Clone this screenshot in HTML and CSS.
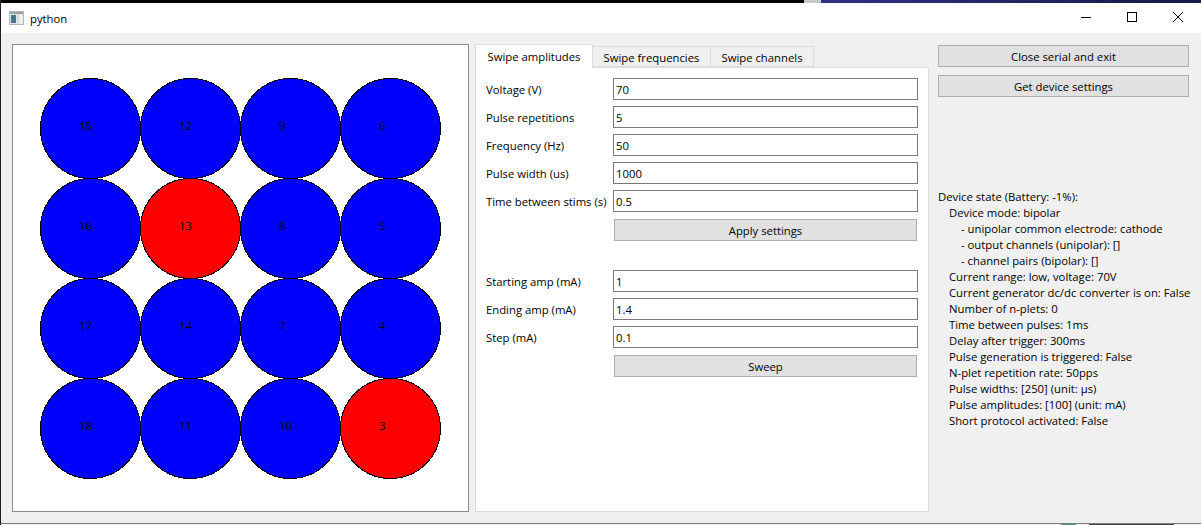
FILE: index.html
```html
<!DOCTYPE html>
<html lang="en">
<head>
  <meta charset="UTF-8">
  <title>python</title>
  <link rel="stylesheet" href="styles.css">
</head>
<body>
  <div class="desktop-top"></div>

  <!-- Title bar -->
  <div class="titlebar">
    <svg class="app-icon" width="15" height="14" viewBox="0 0 15 14">
      <rect x="0.5" y="0.5" width="14" height="13" fill="#e4e8ea" stroke="#b4b8bb"/>
      <rect x="1" y="1" width="13" height="2" fill="#9aa1a6"/>
      <rect x="2" y="4" width="5" height="8" fill="#3d7d86"/>
      <rect x="8" y="4" width="2" height="8" fill="#cfe0dc"/>
      <rect x="11" y="4" width="2" height="8" fill="#f2f4f4"/>
    </svg>
    <span class="app-name">python</span>
    <div class="win-controls">
      <svg class="win-btn" width="46" height="30" viewBox="0 0 46 30"><path d="M18 14.5h10" stroke="#000" fill="none"/></svg>
      <svg class="win-btn" width="46" height="30" viewBox="0 0 46 30"><rect x="18.5" y="9.5" width="9" height="9" stroke="#000" fill="none"/></svg>
      <svg class="win-btn" width="46" height="30" viewBox="0 0 46 30"><path d="M18 9l10 10M28 9l-10 10" stroke="#000" fill="none"/></svg>
    </div>
  </div>

  <div class="main">
    <!-- Electrode map -->
    <div class="canvas-box">
      <svg class="electrodes" width="402" height="402" viewBox="0 0 402 402">
        <g class="dots" shape-rendering="crispEdges">
          <circle cx="50.5" cy="50.5" r="50" fill="#0000ff"/>
          <circle cx="150.5" cy="50.5" r="50" fill="#0000ff"/>
          <circle cx="250.5" cy="50.5" r="50" fill="#0000ff"/>
          <circle cx="350.5" cy="50.5" r="50" fill="#0000ff"/>
          <circle cx="50.5" cy="150.5" r="50" fill="#0000ff"/>
          <circle cx="150.5" cy="150.5" r="50" fill="#ff0000"/>
          <circle cx="250.5" cy="150.5" r="50" fill="#0000ff"/>
          <circle cx="350.5" cy="150.5" r="50" fill="#0000ff"/>
          <circle cx="50.5" cy="250.5" r="50" fill="#0000ff"/>
          <circle cx="150.5" cy="250.5" r="50" fill="#0000ff"/>
          <circle cx="250.5" cy="250.5" r="50" fill="#0000ff"/>
          <circle cx="350.5" cy="250.5" r="50" fill="#0000ff"/>
          <circle cx="50.5" cy="350.5" r="50" fill="#0000ff"/>
          <circle cx="150.5" cy="350.5" r="50" fill="#0000ff"/>
          <circle cx="250.5" cy="350.5" r="50" fill="#0000ff"/>
          <circle cx="350.5" cy="350.5" r="50" fill="#ff0000"/>
        </g>
        <g class="dot-labels">
          <text x="39" y="52">15</text><text x="139" y="52">12</text><text x="239" y="52">9</text><text x="339" y="52">6</text>
          <text x="39" y="152">16</text><text x="139" y="152">13</text><text x="239" y="152">8</text><text x="339" y="152">5</text>
          <text x="39" y="252">17</text><text x="139" y="252">14</text><text x="239" y="252">7</text><text x="339" y="252">4</text>
          <text x="39" y="352">18</text><text x="139" y="352">11</text><text x="239" y="352">10</text><text x="339" y="352">3</text>
        </g>
      </svg>
    </div>

    <!-- Tabs -->
    <div class="tabs">
      <div class="tab-bar">
        <div class="tab active">Swipe amplitudes</div>
        <div class="tab tab-freq">Swipe frequencies</div>
        <div class="tab tab-chan">Swipe channels</div>
      </div>
      <div class="tab-panel">
        <div class="form-row"><span class="form-label">Voltage (V)</span><input class="field" value="70"></div>
        <div class="form-row"><span class="form-label">Pulse repetitions</span><input class="field" value="5"></div>
        <div class="form-row"><span class="form-label">Frequency (Hz)</span><input class="field" value="50"></div>
        <div class="form-row"><span class="form-label">Pulse width (us)</span><input class="field" value="1000"></div>
        <div class="form-row"><span class="form-label">Time between stims (s)</span><input class="field" value="0.5"></div>
        <div class="btn-row"><button class="btn">Apply settings</button></div>
        <div class="form-row section-start"><span class="form-label">Starting amp (mA)</span><input class="field" value="1"></div>
        <div class="form-row"><span class="form-label">Ending amp (mA)</span><input class="field" value="1.4"></div>
        <div class="form-row"><span class="form-label">Step (mA)</span><input class="field" value="0.1"></div>
        <div class="btn-row"><button class="btn">Sweep</button></div>
      </div>
    </div>

    <!-- Device side -->
    <div class="side">
      <button class="btn">Close serial and exit</button>
      <button class="btn">Get device settings</button>
      <div class="state">
        <div>Device state (Battery: -1%):</div>
        <div class="in1">Device mode: bipolar</div>
        <div class="in2">- unipolar common electrode: cathode</div>
        <div class="in2">- output channels (unipolar): []</div>
        <div class="in2">- channel pairs (bipolar): []</div>
        <div class="in1">Current range: low, voltage: 70V</div>
        <div class="in1">Current generator dc/dc converter is on: False</div>
        <div class="in1">Number of n-plets: 0</div>
        <div class="in1">Time between pulses: 1ms</div>
        <div class="in1">Delay after trigger: 300ms</div>
        <div class="in1">Pulse generation is triggered: False</div>
        <div class="in1">N-plet repetition rate: 50pps</div>
        <div class="in1">Pulse widths: [250] (unit: µs)</div>
        <div class="in1">Pulse amplitudes: [100] (unit: mA)</div>
        <div class="in1">Short protocol activated: False</div>
      </div>
    </div>
  </div>

  <div class="desktop-bottom"></div>
</body>
</html>
```

FILE: styles.css
```css
html, body {
  margin: 0;
  padding: 0;
  height: 100%;
  overflow: hidden;
}

body {
  display: flex;
  flex-direction: column;
  font-family: "Open Sans", "Noto Sans", sans-serif;
  font-size: 11.3px;
  color: #000;
  background: #f0f0f0;
  border-left: 1px solid #1c1f2b;
  box-sizing: border-box;
}

/* bits of the desktop behind the window */
.desktop-top {
  height: 3px;
  flex: none;
  margin-left: -1px;
  background: linear-gradient(to right, #000 0, #000 804px, #c8c8c8 804px, #c8c8c8 821px, #2f2f85 821px, #161a44 1201px);
}

.desktop-bottom {
  height: 1px;
  flex: none;
  margin-top: auto;
  border-top: 1px solid #7c7c7c;
  background: linear-gradient(to right, #f0f0f0 0, #f0f0f0 1060px, #3f9a7c 1060px, #3f9a7c 1075px, #f0f0f0 1075px, #f0f0f0 1088px, #3b4258 1088px, #3b4258 1173px, #f0f0f0 1173px);
}

/* Title bar */
.titlebar {
  display: flex;
  align-items: center;
  flex: none;
  height: 30px;
  background: #fff;
  padding-left: 8px;
}

.app-icon {
  margin-right: 6px;
}

.app-name {
  color: #000;
}

.win-controls {
  display: flex;
  margin-left: auto;
}

.win-btn {
  display: block;
}

/* Main row */
.main {
  display: flex;
  align-items: flex-start;
  padding: 11px 0 0 11px;
}

.canvas-box {
  box-sizing: border-box;
  width: 457px;
  height: 468px;
  flex: none;
  padding: 33px 0 0 27px;
  background: #fff;
  border: 1px solid #888c94;
}

.electrodes {
  display: block;
}

.dots circle {
  stroke: #000;
  stroke-width: 1;
}

.dot-labels text {
  font-family: "Open Sans", "Noto Sans", sans-serif;
  font-size: 11.3px;
  fill: #000;
}

/* Tabs */
.tabs {
  width: 454px;
  flex: none;
  margin-left: 6px;
}

.tab-bar {
  display: flex;
  align-items: flex-end;
  height: 23px;
  position: relative;
  z-index: 1;
}

.tab {
  box-sizing: border-box;
  flex: none;
  height: 21px;
  line-height: 22px;
  text-align: center;
  background: #f0f0f0;
  border: 1px solid #dcdcdc;
  border-left: none;
  white-space: nowrap;
}

.tab.active {
  width: 118px;
  height: 24px;
  margin-bottom: -1px;
  line-height: 24px;
  background: #fff;
  border-left: 1px solid #dcdcdc;
  border-bottom: none;
}

.tab-freq {
  width: 118px;
}

.tab-chan {
  width: 103px;
}

.tab-panel {
  box-sizing: border-box;
  height: 445px;
  padding: 10px 10px 0 10px;
  background: #fff;
  border: 1px solid #dcdcdc;
}

.form-row {
  display: flex;
  align-items: center;
  height: 22px;
  margin-bottom: 6px;
}

.section-start {
  margin-top: 29px;
}

.form-label {
  width: 127px;
  flex: none;
  white-space: nowrap;
}

.field {
  box-sizing: border-box;
  width: 305px;
  height: 22px;
  padding: 0 2px;
  font: inherit;
  color: #000;
  background: #fff;
  border: 1px solid #7a7a7a;
  border-radius: 0;
  outline: none;
}

.btn-row {
  padding: 1px 0 0 128px;
}

.btn {
  display: block;
  box-sizing: border-box;
  width: 100%;
  height: 22px;
  padding: 0;
  font: inherit;
  color: #000;
  background: #e1e1e1;
  border: 1px solid #adadad;
  border-radius: 0;
}

.btn-row .btn {
  width: 303px;
}

/* Right column */
.side {
  width: 251px;
  flex: none;
  margin-left: 9px;
  padding-top: 1px;
}

.side .btn {
  margin-bottom: 8px;
}

.state {
  margin-top: 92px;
  line-height: 16px;
  white-space: nowrap;
}

.in1 {
  padding-left: 11px;
}

.in2 {
  padding-left: 23px;
}
```
